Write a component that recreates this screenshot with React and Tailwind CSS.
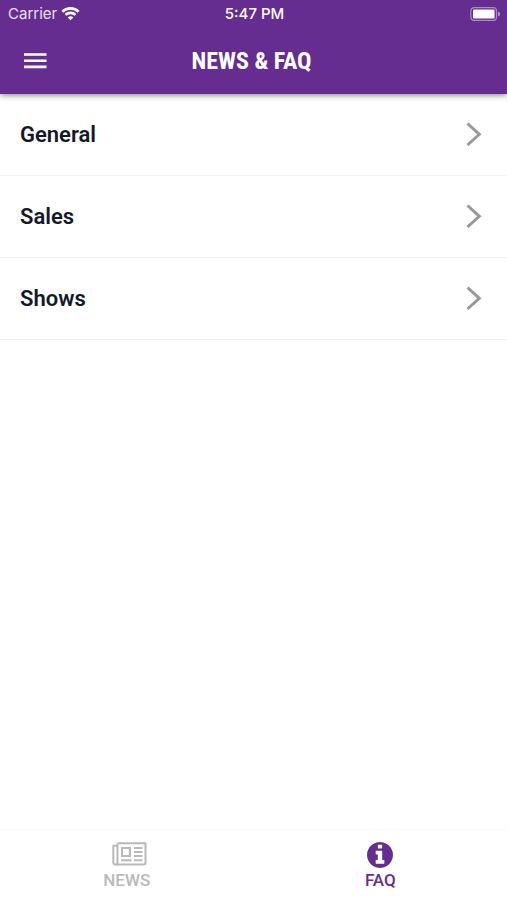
import React, { useState } from "react";

const categories = ["General", "Sales", "Shows"];

function WifiIcon() {
  return (
    <svg width="19" height="15" viewBox="0 0 18 15" fill="none" stroke="#fff" strokeWidth="2.6" aria-hidden="true">
      <path d="M0.9 4.700a11.600 11.600 0 0 1 16.200 0" />
      <path d="M4 7.900a7.200 7.200 0 0 1 10 0" />
      <path d="M9 13.300L6.200 10.500a4 4 0 0 1 5.600 0z" fill="#fff" stroke="none" />
    </svg>
  );
}

function BatteryIcon() {
  return (
    <svg width="31" height="14" viewBox="0 0 31 14" fill="none" aria-hidden="true">
      <rect x="0.9" y="0.6" width="25.6" height="12.8" rx="3.4" stroke="#fff" strokeOpacity="0.45" strokeWidth="1.2" />
      <rect x="3" y="2.4" width="21.6" height="9.2" rx="1.4" fill="#fff" />
      <path d="M28 4.600c1.400.5 2 1.400 2 2.400s-.6 1.900-2 2.400z" fill="#fff" fillOpacity="0.5" />
    </svg>
  );
}

function NewspaperIcon() {
  return (
    <svg width="35" height="24" viewBox="0 0 35 24" fill="none" stroke="currentColor" strokeWidth="2" aria-hidden="true">
      <path d="M5.500 1.200H33.500V20.500a2 2 0 0 1-2 2H3.500a2.200 2.200 0 0 1-2.200-2.200V3.800H5.500" strokeLinejoin="round" />
      <path d="M5.500 1.500V20.500a2 2 0 0 1-2 2" />
      <rect x="10" y="6" width="8" height="8" />
      <path d="M9 18.300H19.500M22 6H30.500M22 10H30.500M22 14H30.500M22 18.300H30.500" />
    </svg>
  );
}

function InfoIcon() {
  return (
    <svg width="26" height="26" viewBox="0 128 1536 1536" fill="currentColor" aria-hidden="true">
      <path d="M1024 1376v-160q0-14-9-23t-23-9h-96V672q0-14-9-23t-23-9H544q-14 0-23 9t-9 23v160q0 14 9 23t23 9h96v320h-96q-14 0-23 9t-9 23v160q0 14 9 23t23 9h448q14 0 23-9t9-23zM896 480V320q0-14-9-23t-23-9H672q-14 0-23 9t-9 23v160q0 14 9 23t23 9h192q14 0 23-9t9-23zm640 416q0 209-103 385.500T1153.500 1561 768 1664t-385.500-103T103 1281.500 0 896t103-385.500T382.500 231 768 128t385.500 103T1433 510.500 1536 896z" />
    </svg>
  );
}

const tabs = [
  { id: "news", label: "NEWS", icon: NewspaperIcon, iconClass: "pl-1.5 pb-0.5" },
  { id: "faq", label: "FAQ", icon: InfoIcon, iconClass: "" },
];

export default function App() {
  const [tab, setTab] = useState("faq");

  return (
    <div className="flex min-h-screen flex-col bg-white font-['Roboto',sans-serif]">
      <header className="relative bg-[#662d91] text-white shadow-[0_1px_6px_rgba(0,0,0,0.5)]">
        <div className="grid h-7 grid-cols-3 items-center pl-2 pr-1.5 font-['Inter',sans-serif] text-[15px]">
          <div className="flex items-center gap-1 text-white/85">
            <span>Carrier</span>
            <WifiIcon />
          </div>
          <span className="text-center font-medium">5:47 PM</span>
          <div className="flex justify-end">
            <BatteryIcon />
          </div>
        </div>
        <div className="grid h-[66px] grid-cols-[46px_1fr_50px] items-center px-3">
          <button type="button" aria-label="Menu" className="flex h-12 items-center justify-center">
            <svg width="24" height="17" viewBox="0 0 24 17" stroke="#fff" strokeWidth="2.6" aria-hidden="true">
              <path d="M1 1.500H23.500M1 7.700H23.500M1 13.900H23.500" />
            </svg>
          </button>
          <h1 className="text-center font-['Roboto_Condensed','Roboto',sans-serif] text-2xl font-bold">
            NEWS &amp; FAQ
          </h1>
        </div>
      </header>

      <main className="flex-1">
        <ul>
          {categories.map((name) => (
            <li key={name} className="border-b border-[#f0f0f0]">
              <button
                type="button"
                className="flex h-[81px] w-full items-center justify-between pl-5 pr-6 text-left text-[22px] font-semibold text-[#14182b]"
              >
                {name}
                <svg width="18" height="26" viewBox="0 0 18 26" fill="none" stroke="#999" strokeWidth="3" aria-hidden="true">
                  <path d="M2.500 1.500L14.300 12.300L2.500 23" />
                </svg>
              </button>
            </li>
          ))}
        </ul>
      </main>

      <nav className="flex border-t border-[#fafafa]">
        {tabs.map(({ id, label, icon: Icon, iconClass }) => (
          <button
            key={id}
            type="button"
            onClick={() => setTab(id)}
            className={`flex h-[70px] flex-1 flex-col items-center pt-3 text-[17px] font-medium leading-6 ${
              tab === id ? "text-[#662d91]" : "text-[#b9b9b9]"
            }`}
          >
            <span className={`flex h-[26px] items-center ${iconClass}`}>
              <Icon />
            </span>
            {label}
          </button>
        ))}
      </nav>
    </div>
  );
}
